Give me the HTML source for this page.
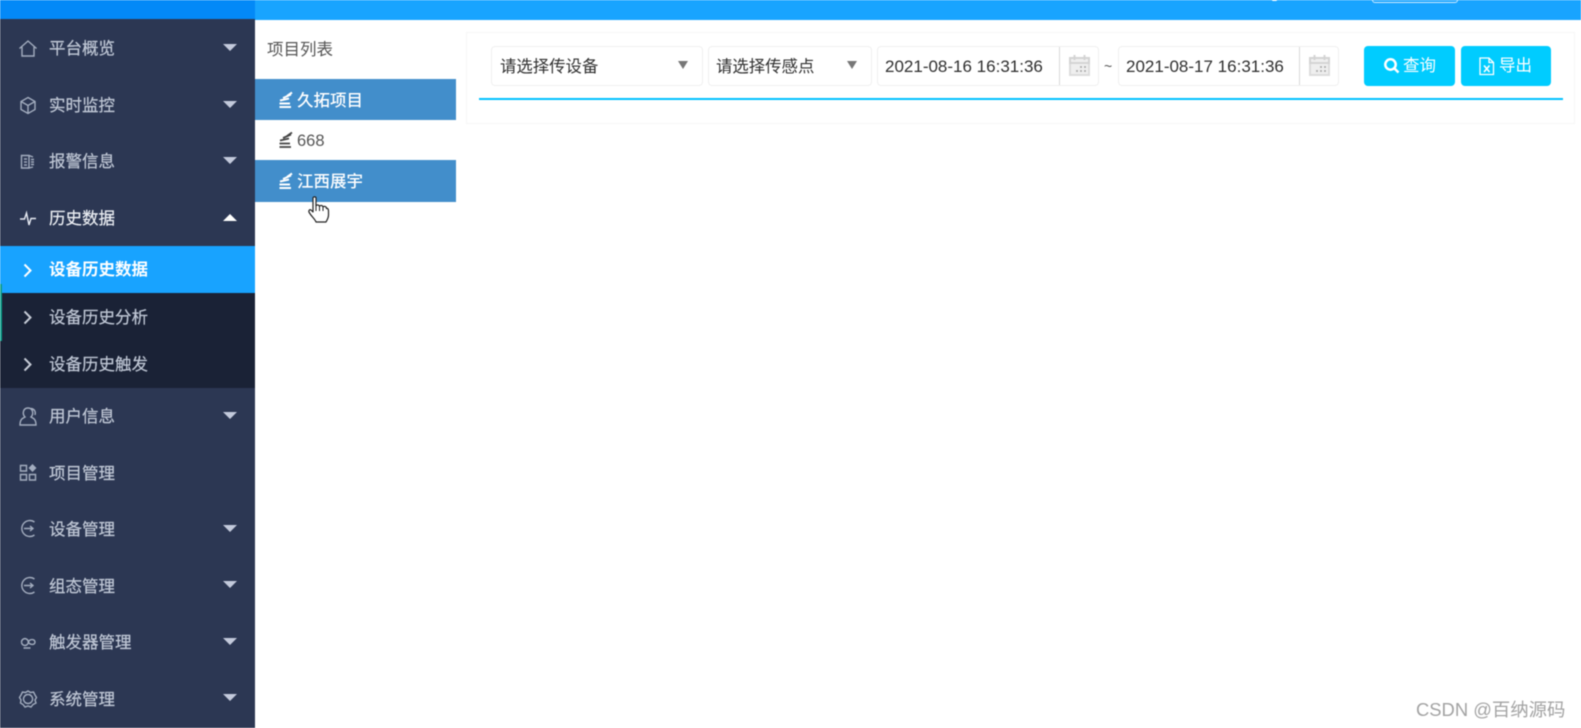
<!DOCTYPE html>
<html lang="zh">
<head>
<meta charset="utf-8">
<title>设备历史数据</title>
<style>
html,body{margin:0;padding:0;background:#fff}
body{width:1581px;height:728px;position:relative;overflow:hidden;font-family:"Liberation Sans","Noto Sans CJK SC",sans-serif;filter:blur(.4px)}
.a{position:absolute;box-sizing:border-box}
.t{position:absolute;white-space:nowrap;line-height:20px;font-size:16.5px}
svg{position:absolute;overflow:visible}
.m{color:#c0c8d6;-webkit-text-stroke:.2px #c0c8d6}
.arr{position:absolute;left:223px;width:0;height:0;border-left:7.5px solid transparent;border-right:7.5px solid transparent;border-top:7px solid #c3cadc}
.ic{fill:none;stroke:#a3adbf;stroke-width:1.4}
.box{position:absolute;background:#fff;border:1px solid #f0f0f0;border-radius:4px;box-sizing:border-box}
.dark{color:#2f2f2f}
.btn{position:absolute;top:46px;height:40px;background:#00ccff;border-radius:4px}
</style>
</head>
<body>
<!-- top bars -->
<div class="a" style="left:0;top:0;width:255px;height:19px;background:#0389f7"></div>
<div class="a" style="left:255px;top:0;width:1326px;height:20px;background:#18a4ff"></div>
<div class="a" style="left:1372px;top:-10px;width:86px;height:13px;border:1px solid #cfeaff;border-radius:3px"></div>
<div class="a" style="left:1272px;top:0;width:5px;height:1px;background:#e8f6ff;border-radius:0 0 3px 3px"></div>

<!-- sidebar -->
<div class="a" style="left:0;top:19px;width:255px;height:709px;background:#2c3753"></div>
<div class="a" style="left:0;top:246px;width:255px;height:47px;background:#18a3ff"></div>
<div class="a" style="left:0;top:293px;width:255px;height:95px;background:#1a2236"></div>
<div class="a" style="left:0;top:284px;width:2px;height:57px;background:#0e9d8a"></div>

<!-- menu icons -->
<svg class="ic" style="left:0;top:0" width="60" height="728" viewBox="0 0 60 728">
  <path d="M19.5 48.5 L28 41 L36.500 48.500 M22 47 V56 H34 V47"/>
  <path d="M28 97.500 L35 101.500 V109.500 L28 113.500 L21 109.500 V101.500 Z M21 101.500 L28 105.500 L35 101.500 M28 105.500 V113.500"/>
  <path d="M21.500 155.500 H29 V168 H21.500 Z M29 155.500 L33 157 M29 168 L33 167 M24 159 H27 M24 162 H27 M24 165 H27 M31 159.500 H34 M31 162 H34 M31 164.500 H34"/>
  <path d="M20 219 H24.500 L26.500 213 L29 225 L31 218.500 H36" stroke="#e6eaf2"/>
  <path d="M20 425 C20 419 23 418 25 417 C22 414 23 408 28 408 C33 408 34 414 31 417 C33 418 36 419 36 425 Z M31 408.500 C34 409 36 411 35 415"/>
  <path d="M20.500 465.500 H26.500 V471 H20.500 Z M20.500 474.500 H26.500 V480 H20.500 Z M29.500 474.500 H35.500 V480 H29.500 Z"/>
  <path d="M32.500 465 L35.500 468 L32.500 471 L29.500 468 Z" fill="#a3adbf"/>
  <path d="M34.500 522 A8 8 0 1 0 34.500 535 M24 528.500 H33 M30 526 L33 528.500 L30 531"/>
  <path d="M34.500 579 A8 8 0 1 0 34.500 592 M24 585.500 H33 M30 583 L33 585.500 L30 588"/>
  <path d="M21 642 a3.400 3.400 0 1 1 0 .1 M28 642 C29 639 34 638.500 34.500 642 C34.500 645.500 29 645 28 642 M23 648 H30" transform="translate(.5 0)"/>
  <path d="M28 691 L30.500 692.500 L33.500 692 L35 695 L36.500 697.500 L35 700 L36 703 L33 704.500 L31 707 L28 706 L25 707 L23 704.500 L20.500 703 L21 700 L19.500 697.500 L21 695 L22.500 692 L25.500 692.500 Z M28 694.500 a4.500 4.500 0 1 0 .1 0"/>
</svg>

<!-- menu text -->
<div class="t m" style="left:49px;top:39px">平台概览</div>
<div class="t m" style="left:49px;top:96px">实时监控</div>
<div class="t m" style="left:49px;top:152px">报警信息</div>
<div class="t" style="left:49px;top:209px;color:#eceff4;-webkit-text-stroke:.2px #eceff4">历史数据</div>
<div class="t" style="left:49px;top:260px;color:#fff;font-weight:bold">设备历史数据</div>
<div class="t m" style="left:49px;top:308px">设备历史分析</div>
<div class="t m" style="left:49px;top:355px">设备历史触发</div>
<div class="t m" style="left:49px;top:407px">用户信息</div>
<div class="t m" style="left:49px;top:464px">项目管理</div>
<div class="t m" style="left:49px;top:520px">设备管理</div>
<div class="t m" style="left:49px;top:577px">组态管理</div>
<div class="t m" style="left:49px;top:633px">触发器管理</div>
<div class="t m" style="left:49px;top:690px">系统管理</div>

<!-- arrows -->
<div class="arr" style="top:44px"></div>
<div class="arr" style="top:101px"></div>
<div class="arr" style="top:157px"></div>
<div class="arr" style="top:214px;border-top:0;border-bottom:7px solid #fff"></div>
<div class="arr" style="top:412px"></div>
<div class="arr" style="top:525px"></div>
<div class="arr" style="top:581px"></div>
<div class="arr" style="top:638px"></div>
<div class="arr" style="top:694px"></div>

<!-- sub chevrons -->
<svg style="left:0;top:0" width="60" height="400" fill="none" stroke-width="2">
  <path d="M24.500 264.500 L30.500 270.500 L24.500 276.500" stroke="#fff"/>
  <path d="M24.500 311.500 L30.500 317.500 L24.500 323.500" stroke="#c5cbd6"/>
  <path d="M24.500 358.500 L30.500 364.500 L24.500 370.500" stroke="#c5cbd6"/>
</svg>

<!-- project list -->
<div class="t" style="left:267px;top:40px;color:#555">项目列表</div>
<div class="a" style="left:255px;top:79px;width:201px;height:41px;background:#428ecb"></div>
<div class="a" style="left:255px;top:160px;width:201px;height:42px;background:#428ecb"></div>
<svg style="left:278px;top:92px" width="17" height="17" fill="none" stroke="#fff" stroke-width="2">
  <path d="M1.500 15 H13 M1.500 11.500 H12 M2 8.500 L11 6.500 M5 6 L13 2.500 M9 4 L14 .5"/>
</svg>
<div class="t" style="left:297px;top:91px;color:#fff;font-weight:500">久拓项目</div>
<svg style="left:278px;top:132px" width="17" height="17" fill="none" stroke="#444" stroke-width="1.800">
  <path d="M1.500 15 H13 M1.500 11.500 H12 M2 8.500 L11 6.500 M5 6 L13 2.500 M9 4 L14 .5"/>
</svg>
<div class="t" style="left:297px;top:131px;color:#555">668</div>
<svg style="left:278px;top:173px" width="17" height="17" fill="none" stroke="#fff" stroke-width="2">
  <path d="M1.500 15 H13 M1.500 11.500 H12 M2 8.500 L11 6.500 M5 6 L13 2.500 M9 4 L14 .5"/>
</svg>
<div class="t" style="left:297px;top:172px;color:#fff;font-weight:500">江西展宇</div>

<!-- cursor -->
<svg style="left:308px;top:196px" width="22" height="27" viewBox="0 0 22 27">
  <path d="M5 2 C5 .5 8 .5 8 2 V10 C8.500 8.500 11 8.500 11.500 10.500 C12 9 14.500 9 15 11 C15.500 10 18.500 10 18.500 12.500 C19.500 12 20.500 13 20.500 15 V19 C20.500 22 19 24 18 26 H8 C7 23 4 21 1.500 17 C0 15 1.500 13 3 14 L5 16 Z" fill="#fff" stroke="#222" stroke-width="1.200" stroke-linejoin="round"/>
  <path d="M8 10 V15 M11.500 10.500 V15 M15 11 V15" stroke="#222" fill="none"/>
</svg>

<!-- filter card -->
<div class="a" style="left:466px;top:32px;width:1109px;height:92px;border:1px solid #f6f6f6;background:#fff"></div>
<div class="box" style="left:491px;top:46px;width:212px;height:40px"></div>
<div class="t dark" style="left:500px;top:57px;font-size:16.400px">请选择传设备</div>
<div class="a" style="left:678px;top:61px;width:0;height:0;border-left:5px solid transparent;border-right:5px solid transparent;border-top:8px solid #777"></div>
<div class="box" style="left:708px;top:46px;width:164px;height:40px"></div>
<div class="t dark" style="left:716px;top:57px;font-size:16.400px">请选择传感点</div>
<div class="a" style="left:847px;top:61px;width:0;height:0;border-left:5px solid transparent;border-right:5px solid transparent;border-top:8px solid #777"></div>

<div class="box" style="left:877px;top:46px;width:222px;height:40px"></div>
<div class="a" style="left:1059px;top:47px;width:1px;height:38px;background:#d9d9d9"></div>
<div class="t dark" style="left:885px;top:57px;font-size:17px">2021-08-16 16:31:36</div>
<div class="t" style="left:1104px;top:56px;font-size:14px;color:#555">~</div>
<div class="box" style="left:1118px;top:46px;width:221px;height:40px"></div>
<div class="a" style="left:1299px;top:47px;width:1px;height:38px;background:#d9d9d9"></div>
<div class="t dark" style="left:1126px;top:57px;font-size:17px">2021-08-17 16:31:36</div>

<svg style="left:1069px;top:54px" width="22" height="23" fill="none" stroke="#dcdcdc" stroke-width="2">
  <rect x="1" y="4" width="19" height="17" fill="#efefef"/>
  <path d="M1 4 H20 V9 H1 Z M5.500 1 V6 M15.500 1 V6" stroke="#d4d4d4"/>
  <path d="M12 12 V14 M16 12 V14 M8 16 V18 M12 16 V18 M16 16 V18" stroke="#b5b5b5"/>
</svg>
<svg style="left:1309px;top:54px" width="22" height="23" fill="none" stroke="#dcdcdc" stroke-width="2">
  <rect x="1" y="4" width="19" height="17" fill="#efefef"/>
  <path d="M1 4 H20 V9 H1 Z M5.500 1 V6 M15.500 1 V6" stroke="#d4d4d4"/>
  <path d="M12 12 V14 M16 12 V14 M8 16 V18 M12 16 V18 M16 16 V18" stroke="#b5b5b5"/>
</svg>

<div class="btn" style="left:1364px;width:91px"></div>
<div class="btn" style="left:1461px;width:90px"></div>
<svg style="left:1383px;top:57px" width="18" height="18" fill="none" stroke="#fff" stroke-width="2.500">
  <circle cx="7.500" cy="7.500" r="5.200"/><path d="M11.500 11.500 L15.500 15.500"/>
</svg>
<div class="t" style="left:1403px;top:56px;color:#fff">查询</div>
<svg style="left:1479px;top:57px" width="16" height="19" fill="none" stroke="#fff" stroke-width="1.300">
  <path d="M1 1 H10 L14.500 5.500 V17.500 H1 Z M10 1 V5.500 H14.500"/>
  <path d="M5 8.500 L10.500 15 M10.500 8.500 L5 15" stroke-width="1.600"/>
</svg>
<div class="t" style="left:1499px;top:56px;color:#fff">导出</div>

<div class="a" style="left:479px;top:98px;width:1084px;height:2px;background:#00c2ff"></div>

<!-- watermark -->
<div class="t" style="left:1416px;top:700px;font-size:18.400px;color:#a3a3a3">CSDN @百纳源码</div>
</body>
</html>
